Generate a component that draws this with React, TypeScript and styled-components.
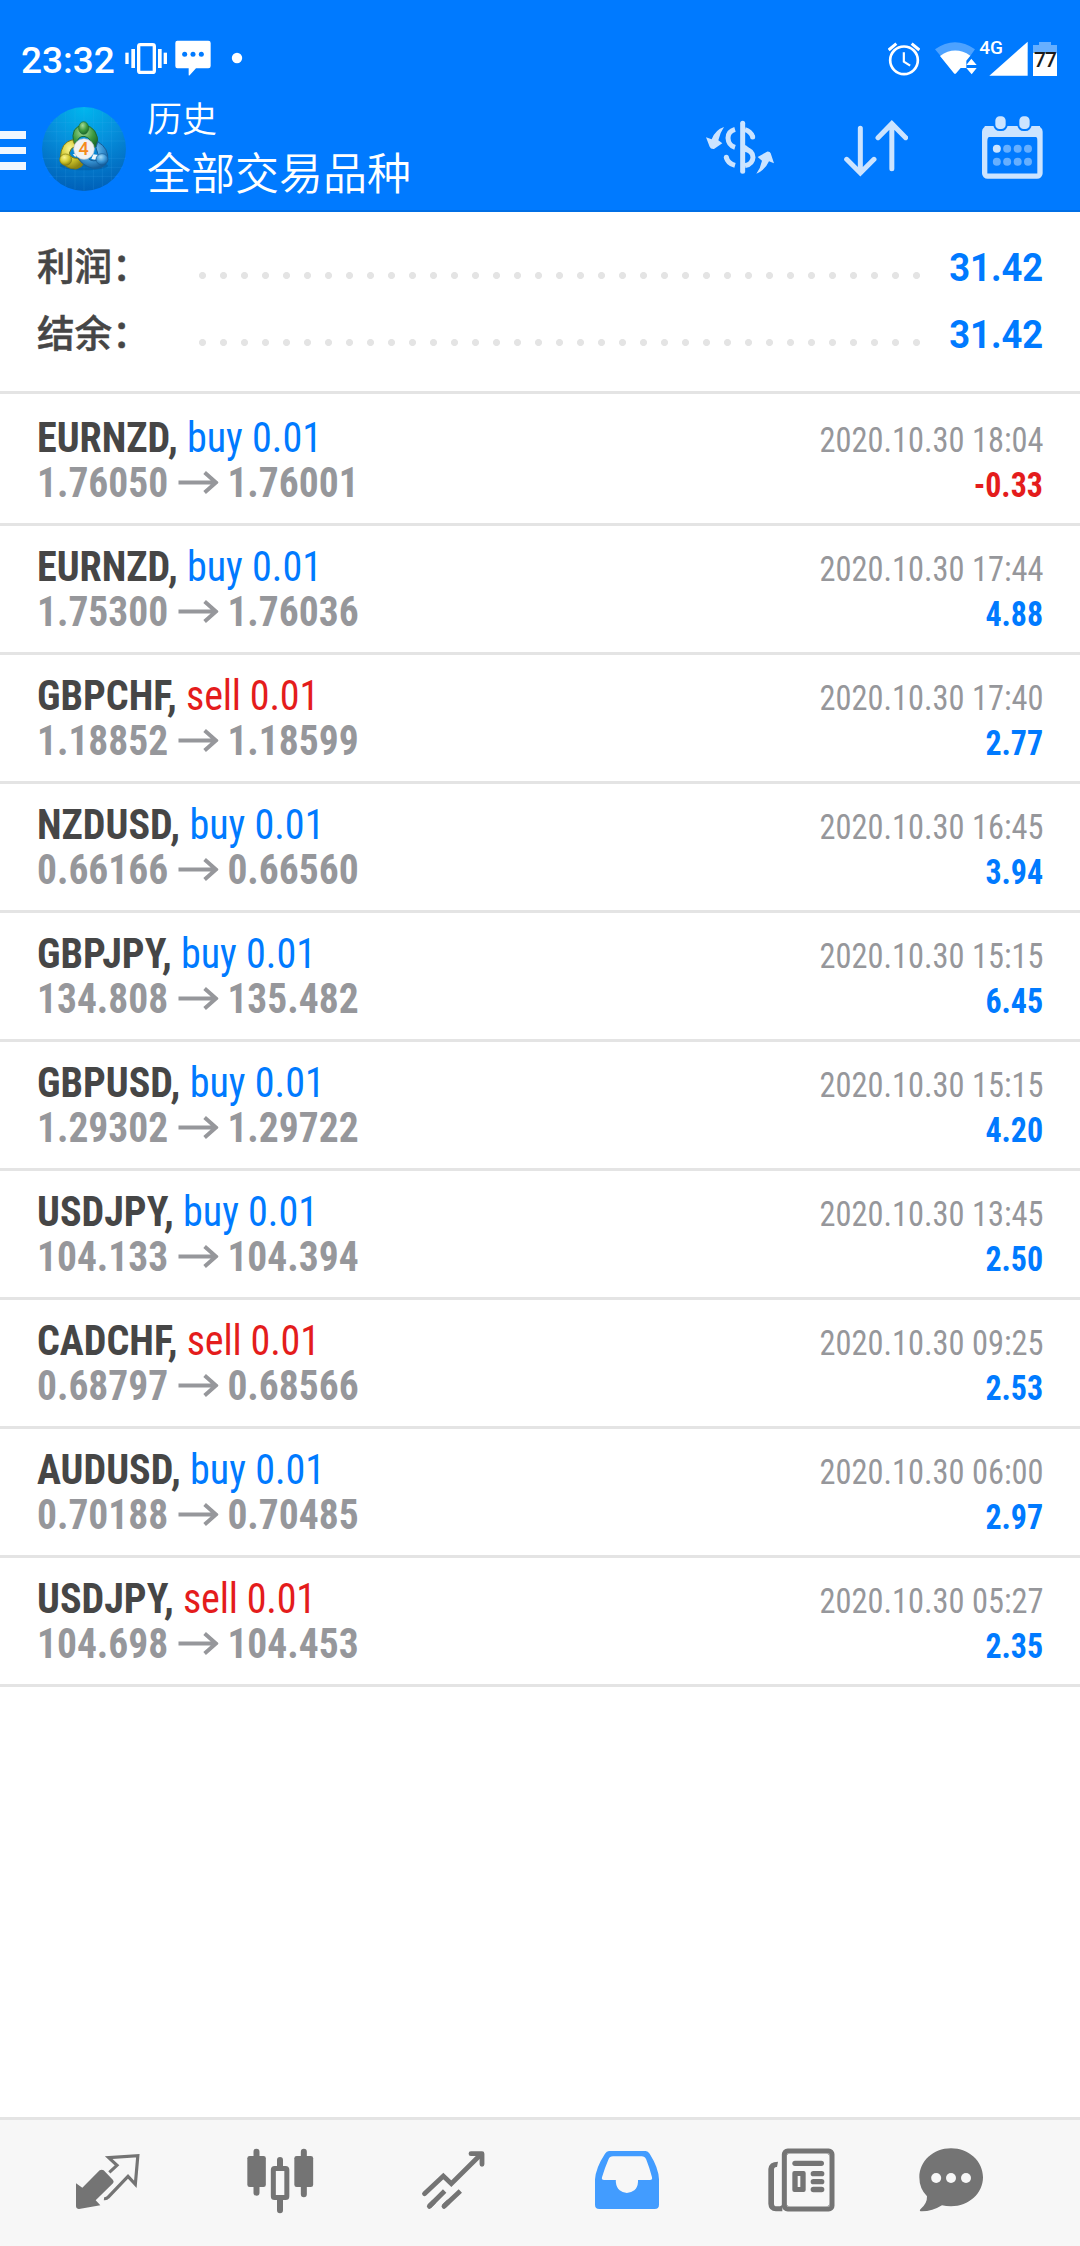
import React from "react";
import styled, { createGlobalStyle } from "styled-components";

const GlobalStyle = createGlobalStyle`
  body {
    margin: 0;
    background: #ffffff;
  }
  svg {
    display: block;
    flex: none;
  }
`;

const BLUE = "#007aff";
const RED = "#e41c1c";
const LINE = "#e4e4e4";
const CONDENSED = `"Roboto Condensed", Roboto, sans-serif`;
const CJK = `Roboto, "Noto Sans CJK SC", sans-serif`;

const Screen = styled.div`
  width: 1080px;
  height: 2246px;
  display: flex;
  flex-direction: column;
  background: #ffffff;
  overflow: hidden;
`;

const Header = styled.header`
  box-sizing: border-box;
  height: 212px;
  background: ${BLUE};
  border-bottom: 2px solid #006fe6;
`;

const StatusBar = styled.div`
  box-sizing: border-box;
  height: 84px;
  padding: 40px 23px 0 21px;
  display: flex;
  align-items: flex-start;
`;

const Clock = styled.span`
  width: 104px;
  font: 500 37px/41px ${CJK};
  color: #ffffff;
`;

const StatusGroup = styled.div<{ $gap: number; $end?: boolean }>`
  display: flex;
  gap: ${(p) => p.$gap}px;
  margin-left: ${(p) => (p.$end ? "auto" : "0")};
`;

const StatusSlot = styled.span<{ $before?: number; $after?: number }>`
  padding-left: ${(p) => p.$before ?? 0}px;
  padding-right: ${(p) => p.$after ?? 0}px;
`;

const Toolbar = styled.div`
  box-sizing: border-box;
  height: 126px;
  padding-top: 4px;
  display: flex;
  align-items: center;
`;

const Burger = styled.div`
  display: flex;
  flex-direction: column;
  gap: 8.3px;
  width: 26px;
  padding-top: 3px;
  margin-right: 16px;
`;

const BurgerBar = styled.span`
  height: 7.4px;
  background: #f0f7ff;
`;

const Titles = styled.div`
  display: flex;
  flex-direction: column;
  margin-left: 21px;
  color: #ffffff;
`;

const Subtitle = styled.span`
  font: 350 35px/44px "Noto Sans CJK SC", sans-serif;
`;

const Title = styled.span`
  font: 350 44px/64px "Noto Sans CJK SC", sans-serif;
`;

const Actions = styled.div`
  display: flex;
  gap: 70px;
  margin: 0 37px 0 auto;
  padding-bottom: 2px;

  svg:last-child {
    margin-left: 4px;
  }
`;

const Summary = styled.section`
  box-sizing: border-box;
  height: 182px;
  padding: 22px 37px 0;
  border-bottom: 3px solid ${LINE};
`;

const SummaryRow = styled.div`
  display: flex;
  align-items: center;
  height: 67px;
`;

const SummaryLabel = styled.span`
  width: 155px;
  padding-bottom: 7px;
  font: 500 37.6px/60px "Noto Sans CJK SC", sans-serif;
  -webkit-text-stroke: 0.5px #464646;
  color: #464646;
`;

const Leader = styled.span`
  width: 735px;
  height: 21px;
  margin-top: 16px;
  background: radial-gradient(circle at center, ${LINE} 3.1px, transparent 3.9px) 0 0 / 21px 21px;
`;

const SummaryValue = styled.span`
  margin-left: auto;
  padding-top: 2px;
  font: 700 38px/65px Roboto, sans-serif;
  transform: scaleX(0.957);
  transform-origin: right;
  color: ${BLUE};
`;

const Deals = styled.ul`
  flex: 1;
  margin: 0;
  padding: 3px 0 0;
  list-style: none;
`;

const Deal = styled.li`
  box-sizing: border-box;
  height: 129px;
  padding: 18px 37px 0;
  border-bottom: 3px solid ${LINE};
  display: flex;
  justify-content: space-between;
`;

const DealSide = styled.div<{ $right?: boolean }>`
  display: flex;
  flex-direction: column;
  align-items: ${(p) => (p.$right ? "flex-end" : "flex-start")};
`;

const Instrument = styled.div`
  font: 700 42px/45px ${CONDENSED};
  transform: scaleX(0.955);
  transform-origin: left;
  color: #464646;
  white-space: pre;
`;

const Action = styled.span<{ $sell: boolean }>`
  font-weight: 400;
  letter-spacing: ${(p) => (p.$sell ? "-0.2px" : "0")};
  color: ${(p) => (p.$sell ? RED : BLUE)};
`;

const Prices = styled.div`
  display: flex;
  align-items: center;
  gap: 10px;
  font: 700 42px/45px ${CONDENSED};
  transform: scaleX(0.94);
  transform-origin: left;
  color: #96979b;
`;

const Time = styled.span`
  font: 400 35.5px/45px ${CONDENSED};
  transform: scaleX(0.912);
  transform-origin: right;
  color: #96979b;
  padding-top: 3px;
`;

const Profit = styled.span<{ $loss: boolean }>`
  font: 700 35.5px/45px ${CONDENSED};
  transform: scaleX(0.9);
  transform-origin: right;
  color: ${(p) => (p.$loss ? RED : BLUE)};
`;

const NavBar = styled.nav`
  display: flex;
  align-items: center;
  box-sizing: border-box;
  height: 129px;
  padding-left: 21.5px;
  border-top: 3px solid ${LINE};
  background: #f7f7f7;
`;

const NavItem = styled.div<{ $active?: boolean; $last?: boolean }>`
  width: ${(p) => (p.$last ? 129 : 173)}px;
  display: flex;
  justify-content: center;
  color: ${(p) => (p.$active ? "#429cff" : "#747474")};
`;

const VibrateIcon = () => (
  <svg width="42.67" height="36" viewBox="375 60 128 108" fill="#fff">
    <rect x="376" y="98" width="10" height="34" />
    <rect x="394" y="87" width="11" height="57" />
    <rect x="416" y="74" width="47" height="83" rx="5" fill="none" stroke="#fff" strokeWidth="10" />
    <rect x="474" y="87" width="11" height="57" />
    <rect x="491" y="98" width="10" height="34" />
  </svg>
);

const MessageIcon = () => (
  <svg width="36" height="36" viewBox="524 61 108 108">
    <path d="M531 63h93q7 0 7 7v69q0 7-7 7h-37l-19 21q-3 2-3-2v-19h-34q-6 0-6-7v-69q0-7 6-7z" fill="#fff" />
    <g fill={BLUE}>
      <circle cx="553" cy="104" r="7.5" />
      <circle cx="578" cy="104" r="7.5" />
      <circle cx="603" cy="104" r="7.5" />
    </g>
  </svg>
);

const DotIcon = () => (
  <svg width="12" height="36" viewBox="693 60 36 108">
    <circle cx="711" cy="114" r="15.5" fill="#fff" />
  </svg>
);

const AlarmIcon = () => (
  <svg width="32" height="36" viewBox="685 60 96 108" fill="none" stroke="#fff">
    <circle cx="733" cy="121" r="41.5" strokeWidth="8" />
    <path d="M687 90L710 71M779 90L756 71" strokeWidth="9" />
    <path d="M732.500 97v28l19 12" strokeWidth="6.500" />
  </svg>
);

const WifiIcon = () => (
  <svg width="42" height="36" viewBox="826 60 126 108" fill="#fff">
    <path d="M826 88Q886 46 946 88L930 110Q886 78 843 108z" fillOpacity="0.3" />
    <path d="M841 108Q886 76 932 107L920 122v22h-17L888 161h-4z" />
    <path d="M920 135l15-19 16 19zM920 144h31l-15 19z" />
  </svg>
);

const NetworkLabel = styled.span`
  font: 500 19px/24px Roboto, sans-serif;
  color: #ffffff;
  margin: -4px -14px 0 2.5px;
`;

const SignalIcon = () => (
  <svg width="39" height="36" viewBox="988 60 117 108" fill="#fff">
    <path d="M1104 65V167.500H989z" />
  </svg>
);

const Battery = styled.div`
  width: 24px;
  height: 34px;
  margin: 2px 0 0 5px;
  background:
    linear-gradient(#66afff, #66afff) 6px 0 / 12px 4px no-repeat,
    linear-gradient(#66afff 0 8px, #ffffff 8px) 0 3px / 24px 31px no-repeat;
  font: 500 21px/36px Roboto, sans-serif;
  letter-spacing: -1px;
  text-align: center;
  color: #1b1b1b;
`;

const LogoIcon = () => (
  <svg width="84" height="84" viewBox="36 36 252 252">
    <defs>
      <radialGradient id="sky" cx="50%" cy="0%" r="100%">
        <stop offset="0" stopColor="#00b7ee" />
        <stop offset="0.45" stopColor="#0690dc" />
        <stop offset="1" stopColor="#0060b8" />
      </radialGradient>
      <radialGradient id="green" cx="40%" cy="30%" r="70%">
        <stop offset="0" stopColor="#a6dc9a" />
        <stop offset="0.6" stopColor="#3d9a3f" />
        <stop offset="1" stopColor="#1d6b2c" />
      </radialGradient>
      <radialGradient id="yellow" cx="40%" cy="30%" r="70%">
        <stop offset="0" stopColor="#fbf58e" />
        <stop offset="0.6" stopColor="#cfc52a" />
        <stop offset="1" stopColor="#8c8414" />
      </radialGradient>
      <radialGradient id="azure" cx="40%" cy="30%" r="70%">
        <stop offset="0" stopColor="#a5dcf8" />
        <stop offset="0.6" stopColor="#3a96d6" />
        <stop offset="1" stopColor="#155f9e" />
      </radialGradient>
    </defs>
    <circle cx="162" cy="162" r="126" fill="url(#sky)" />
    <path
      d="M80 68V256M107 50V274M135 40V284M162 36V288M190 40V284M217 50V274M244 68V256M60 82H264M46 110H278M38 138H286M36 190H288M46 217H278M58 244H266"
      stroke="#4db4ee"
      strokeOpacity="0.22"
      strokeWidth="2"
      fill="none"
    />
    <ellipse cx="162" cy="212" rx="72" ry="14" fill="#00407c" fillOpacity="0.3" />
    <path d="M131 145Q120 92 162 91Q205 94 204 152L186 160Q187 128 162 124Q143 124 140 145z" fill="url(#green)" stroke="#1e6b33" strokeWidth="3" />
    <path d="M128 134Q92 142 91 190Q100 222 138 222Q158 216 160 206L142 190Q120 190 118 174Q122 158 136 154z" fill="url(#yellow)" stroke="#7d7a16" strokeWidth="3" />
    <path d="M203 140Q238 160 233 198Q220 224 188 220Q158 212 145 190L170 184Q180 202 202 196Q208 180 198 158z" fill="url(#azure)" stroke="#175e98" strokeWidth="3" />
    <path d="M128 178l14-2-6 10zM190 178l16 2-10 14-12-2z" fill="#eef6fb" />
    <ellipse cx="161" cy="99" rx="15" ry="19" fill="url(#green)" stroke="#1f6c34" strokeWidth="2" />
    <ellipse cx="107" cy="194" rx="18" ry="17" fill="url(#yellow)" stroke="#7d7a16" strokeWidth="2" />
    <ellipse cx="216" cy="193" rx="18" ry="17" fill="url(#azure)" stroke="#175e98" strokeWidth="2" />
    <circle cx="162" cy="162" r="31" fill="#f1f1f3" stroke="#c9cbd2" strokeWidth="2" />
    <text x="161" y="180" textAnchor="middle" fontFamily="Roboto, sans-serif" fontWeight="500" fontSize="54" fill="#f58a1c">
      4
    </text>
  </svg>
);

const CurrencyIcon = () => (
  <svg width="68" height="64" viewBox="138 288 204 192" fill="#cce4ff">
    <path d="M192 321Q179 340 175 361L187 370L162 387Q152 388 149 380L138 352L155 358Q166 329 192 321z" />
    <path d="M289 461Q302 443 306 422L293 411L321 395Q330 394 332 400L342 430L327 424Q316 450 289 461z" />
    <g fill="none" stroke="#cce4ff" strokeWidth="15">
      <path d="M225 328Q204 334 204 354Q205 376 225 382" />
      <path d="M255 329Q271 333 278 350" />
      <path d="M199 412Q203 430 225 436" />
      <path d="M255 388Q278 392 279 412Q278 432 255 437" />
    </g>
    <circle cx="278" cy="351" r="7.500" />
    <circle cx="199" cy="412" r="7.500" />
    <path d="M248 310V454" stroke="#cce4ff" strokeWidth="15" strokeLinecap="round" />
    <path d="M252 381L262 389" stroke="#cce4ff" strokeWidth="15" />
  </svg>
);

const SortIcon = () => (
  <svg width="64" height="64" viewBox="552 288 192 192" fill="none" stroke="#cce4ff" strokeWidth="15" strokeLinecap="round">
    <path d="M601 325V458M560 418L601 459L642 418" />
    <path d="M695.500 446V313M654 353L695.500 311L737 353" />
  </svg>
);

const CalendarIcon = () => (
  <svg width="60.67" height="64" viewBox="966 288 182 192" fill="#cce4ff">
    <rect x="974" y="326" width="166" height="142.500" rx="9" fill="none" stroke="#cce4ff" strokeWidth="16" />
    <path d="M974 318h166v33H974z" />
    <path d="M981 364q0-15 15-15h-15zM1134 364q0-15-15-15h15z" />
    <g stroke={BLUE} strokeWidth="6">
      <rect x="1003" y="286" width="37" height="44" rx="16" />
      <rect x="1075" y="286" width="37" height="44" rx="16" />
    </g>
    <circle cx="1010.500" cy="386" r="12" />
    <g fill="#66afff">
      <circle cx="1041.500" cy="386" r="12" />
      <circle cx="1073" cy="386" r="12" />
      <circle cx="1104" cy="386" r="12" />
      <circle cx="1010.500" cy="425.500" r="12" />
      <circle cx="1041.500" cy="425.500" r="12" />
      <circle cx="1073" cy="425.500" r="12" />
      <circle cx="1104" cy="425.500" r="12" />
    </g>
  </svg>
);

const ArrowIcon = () => (
  <svg width="43" height="24" viewBox="0 0 41 24" preserveAspectRatio="none" fill="none" stroke="#96979b" strokeWidth="4">
    <path d="M0.500 11.500H39M27 1.500L38.500 11.500L27 21.500" />
  </svg>
);

const QuotesIcon = () => (
  <svg width="80" height="80" viewBox="24 39 240 240" fill="currentColor">
    <path d="M48 160L67 173L119 121Q125 117 131 121L159 150Q163 156 159 160L107 211L121 226L57 237Q49 237 48 229z" />
    <path
      d="M148 127L171 106L146 83L233.500 77L226 163L204 139L144 202Q140 207 132 206"
      fill="none"
      stroke="currentColor"
      strokeWidth="9.500"
    />
  </svg>
);

const ChartIcon = () => (
  <svg width="80" height="80" viewBox="543 39 240 240" fill="currentColor">
    <g stroke="currentColor" strokeWidth="18" strokeLinecap="round">
      <path d="M589.500 65V188M731.500 65V193M660 90V110M660 205V241" />
    </g>
    <rect x="562" y="78" width="55.500" height="93" rx="7" />
    <rect x="703" y="78" width="56.500" height="93" rx="7" />
    <rect x="640" y="115.500" width="40.500" height="87" rx="4" fill="#f7f7f7" stroke="currentColor" strokeWidth="15" />
    <rect x="648" y="123" width="24" height="72" rx="7" fill="#f7f7f7" />
  </svg>
);

const TradeIcon = () => (
  <svg width="80" height="80" viewBox="42 39 240 240" fill="none" stroke="currentColor" strokeWidth="14.500">
    <g strokeLinecap="round">
      <path d="M73.500 191L130 138L154 161L240 76" strokeLinejoin="miter" />
      <path d="M213 71H246V103" strokeLinejoin="round" />
      <path d="M88 229L101 216M132 229L145 216" />
    </g>
    <path d="M88 229L134 183M132 229L181 183" />
    <path d="M228 71h20v20z" fill="currentColor" strokeWidth="4" />
  </svg>
);

const HistoryIcon = () => (
  <svg width="80" height="80" viewBox="561 39 240 240" fill="currentColor">
    <path
      fillRule="evenodd"
      d="M627 63H737Q744 63 749 71Q776 114 777 148V224Q777 237 764 237H598Q585 237 585 224V148Q587 114 615 71Q620 63 627 63zM639 79Q629 79 625 89Q614 114 606 142Q604 150 612 150H647.500V156Q649 172 659 181Q669 189 680.500 189Q692 189 703 181Q713 172 714 156V150H750Q758 150 756 142Q749 114 739 89Q734 79 725 79z"
    />
  </svg>
);

const NewsIcon = () => (
  <svg width="80" height="80" viewBox="30 39 240 240" fill="currentColor">
    <rect x="103" y="63" width="143" height="174" rx="10" fill="none" stroke="currentColor" strokeWidth="15" />
    <path d="M110 80q0-9 9-9h-9zM238 80q0-9-9-9h9zM110 219q0 10 9 10h-9zM238 219q0 10-9 10h9z" />
    <path d="M84 95L81 111Q72 110 72 119V221Q72 229 80 229H90Q96 228 97 222V244H78Q56 243 55 221V117Q57 95 84 95z" />
    <rect x="127" y="92" width="95" height="16" rx="8" />
    <path fillRule="evenodd" d="M133 123h28q6 0 6 6v51q0 6-6 6h-28q-6 0-6-6v-51q0-6 6-6zM143 138v33h8v-33z" />
    <rect x="182" y="123" width="41" height="16" rx="8" />
    <rect x="182" y="147" width="41" height="16" rx="8" />
    <rect x="182" y="170.500" width="41" height="16" rx="8" />
  </svg>
);

const ChatIcon = () => (
  <svg width="80" height="80" viewBox="483 39 240 240" fill="currentColor">
    <path d="M603 55C657 55 699 94 699 142C699 190 657 229 603 229Q588 229 576 226Q546 245 512 244Q507 242 512 237Q532 220 531 199Q508 176 508 142C508 94 549 55 603 55z" />
    <g fill="#f7f7f7">
      <circle cx="558.500" cy="144" r="15" />
      <circle cx="603" cy="144" r="15" />
      <circle cx="648" cy="144" r="15" />
    </g>
  </svg>
);

const summary = [
  { label: "利润：", value: "31.42" },
  { label: "结余：", value: "31.42" },
];

const deals = [
  { symbol: "EURNZD", side: "buy", open: "1.76050", close: "1.76001", time: "2020.10.30 18:04", profit: "-0.33" },
  { symbol: "EURNZD", side: "buy", open: "1.75300", close: "1.76036", time: "2020.10.30 17:44", profit: "4.88" },
  { symbol: "GBPCHF", side: "sell", open: "1.18852", close: "1.18599", time: "2020.10.30 17:40", profit: "2.77" },
  { symbol: "NZDUSD", side: "buy", open: "0.66166", close: "0.66560", time: "2020.10.30 16:45", profit: "3.94" },
  { symbol: "GBPJPY", side: "buy", open: "134.808", close: "135.482", time: "2020.10.30 15:15", profit: "6.45" },
  { symbol: "GBPUSD", side: "buy", open: "1.29302", close: "1.29722", time: "2020.10.30 15:15", profit: "4.20" },
  { symbol: "USDJPY", side: "buy", open: "104.133", close: "104.394", time: "2020.10.30 13:45", profit: "2.50" },
  { symbol: "CADCHF", side: "sell", open: "0.68797", close: "0.68566", time: "2020.10.30 09:25", profit: "2.53" },
  { symbol: "AUDUSD", side: "buy", open: "0.70188", close: "0.70485", time: "2020.10.30 06:00", profit: "2.97" },
  { symbol: "USDJPY", side: "sell", open: "104.698", close: "104.453", time: "2020.10.30 05:27", profit: "2.35" },
];

export default function App() {
  return (
    <>
      <GlobalStyle />
      <Screen>
        <Header>
          <StatusBar>
            <Clock>23:32</Clock>
            <StatusGroup $gap={7}>
              <VibrateIcon />
              <MessageIcon />
              <StatusSlot $before={13.5}>
                <DotIcon />
              </StatusSlot>
            </StatusGroup>
            <StatusGroup $gap={0} $end>
              <StatusSlot $after={15}>
                <AlarmIcon />
              </StatusSlot>
              <WifiIcon />
              <NetworkLabel>4G</NetworkLabel>
              <SignalIcon />
              <Battery>77</Battery>
            </StatusGroup>
          </StatusBar>
          <Toolbar>
            <Burger>
              <BurgerBar />
              <BurgerBar />
              <BurgerBar />
            </Burger>
            <LogoIcon />
            <Titles>
              <Subtitle>历史</Subtitle>
              <Title>全部交易品种</Title>
            </Titles>
            <Actions>
              <CurrencyIcon />
              <SortIcon />
              <CalendarIcon />
            </Actions>
          </Toolbar>
        </Header>
        <Summary>
          {summary.map((s) => (
            <SummaryRow key={s.label}>
              <SummaryLabel>{s.label}</SummaryLabel>
              <Leader />
              <SummaryValue>{s.value}</SummaryValue>
            </SummaryRow>
          ))}
        </Summary>
        <Deals>
          {deals.map((d) => (
            <Deal key={d.time + d.symbol}>
              <DealSide>
                <Instrument>
                  {d.symbol}, <Action $sell={d.side === "sell"}>{d.side} 0.01</Action>
                </Instrument>
                <Prices>
                  <span>{d.open}</span>
                  <ArrowIcon />
                  <span>{d.close}</span>
                </Prices>
              </DealSide>
              <DealSide $right>
                <Time>{d.time}</Time>
                <Profit $loss={d.profit.startsWith("-")}>{d.profit}</Profit>
              </DealSide>
            </Deal>
          ))}
        </Deals>
        <NavBar>
          <NavItem><QuotesIcon /></NavItem>
          <NavItem><ChartIcon /></NavItem>
          <NavItem><TradeIcon /></NavItem>
          <NavItem $active><HistoryIcon /></NavItem>
          <NavItem><NewsIcon /></NavItem>
          <NavItem $last><ChatIcon /></NavItem>
        </NavBar>
      </Screen>
    </>
  );
}
